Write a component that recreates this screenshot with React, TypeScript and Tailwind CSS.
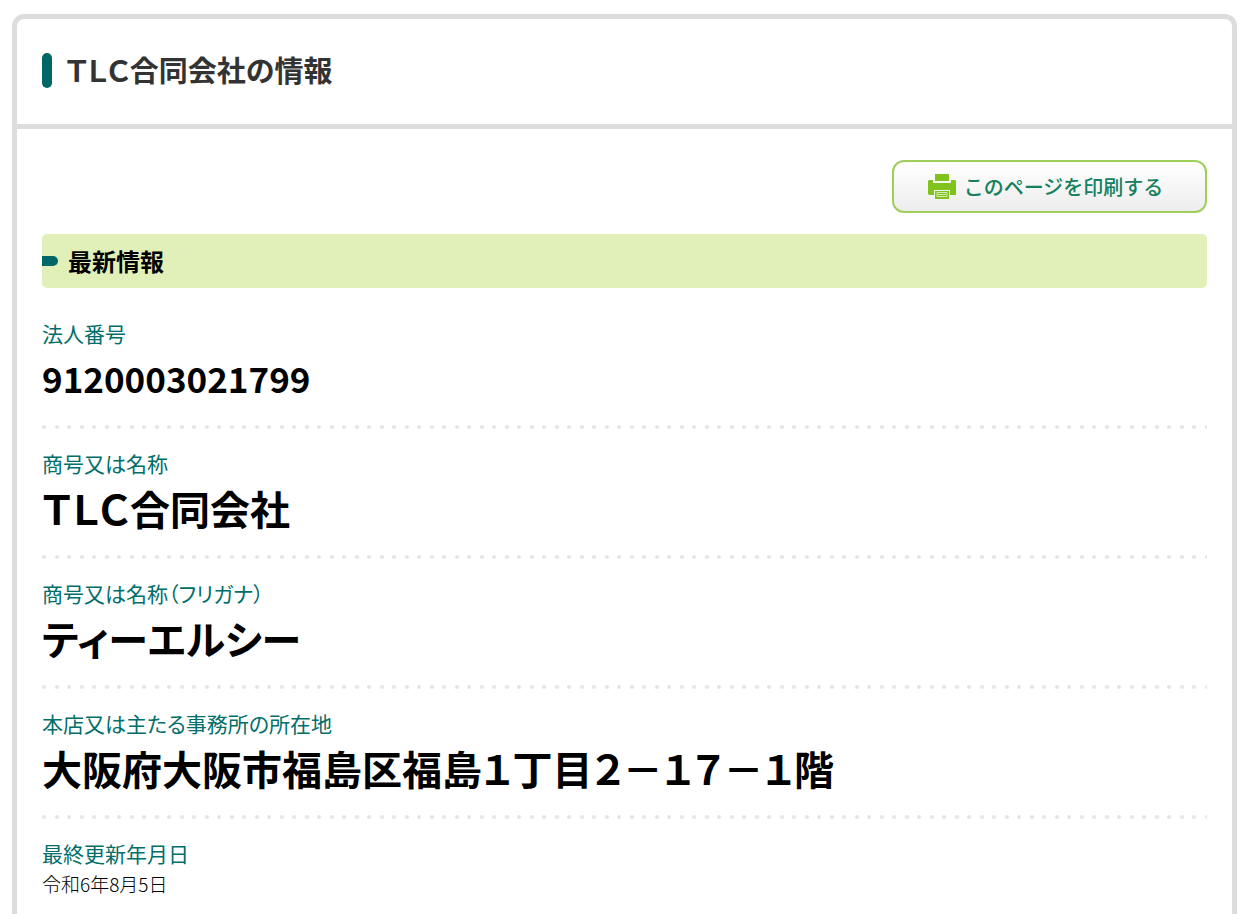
import { ReactNode } from 'react';

interface InfoItem {
  label: string;
  value: string;
  size?: 'number' | 'large' | 'small';
}

const items: InfoItem[] = [
  { label: '法人番号', value: '9120003021799', size: 'number' },
  { label: '商号又は名称', value: 'ＴＬＣ合同会社', size: 'large' },
  { label: '商号又は名称（フリガナ）', value: 'ティーエルシー', size: 'large' },
  { label: '本店又は主たる事務所の所在地', value: '大阪府大阪市福島区福島１丁目２－１７－１階', size: 'large' },
  { label: '最終更新年月日', value: '令和6年8月5日', size: 'small' },
];

const valueStyles = {
  number: 'text-[35px] leading-[60px] font-bold',
  large: 'text-[40px] leading-[60px] font-bold',
  small: 'text-[19px] leading-[32px] font-light',
};

function PrinterIcon() {
  return (
    <svg width="28" height="26" viewBox="0 0 28 26" aria-hidden="true">
      <path fill="#7fc31c" d="M7 0h14v7H7zM1 6h4v3h18V6h4l1 1v14h-6v-5H6v5H1l-1-1V7z" />
      <path fill="#7fc31c" d="M7 17h14v8H7z" />
      <path stroke="#d6ecae" strokeWidth="1" fill="none" d="M9 18.5h10v4H9zM10 20.5h8" />
    </svg>
  );
}

function PanelHeader({ children }: { children: ReactNode }) {
  return (
    <header className="flex h-[110px] items-center gap-[14px] border-b-5 border-[#ddd] px-[25px] pb-[2px]">
      <span className="h-[35px] w-[10px] rounded-full bg-[#006666]" />
      <h1 className="pb-1 text-[29px] leading-[40px] font-bold text-[#333]">{children}</h1>
    </header>
  );
}

function InfoRow({ item, last }: { item: InfoItem; last: boolean }) {
  return (
    <div>
      <dt className="text-[21px] leading-[30px] text-[#006e6a]">{item.label}</dt>
      <dd className={valueStyles[item.size ?? 'large']}>{item.value}</dd>
      {!last && (
        <dd
          aria-hidden="true"
          className="mt-[17px] mb-[19px] h-[4px] bg-[radial-gradient(circle_at_2px_2px,#e4e4e4_1px,transparent_3px),radial-gradient(circle_at_15px_2px,#e4e4e4_1px,transparent_3px)] bg-[length:25px_4px] bg-repeat-x"
        />
      )}
    </div>
  );
}

export default function App() {
  return (
    <div className="flex min-h-screen flex-col bg-white pt-[14px] pr-[19px] pl-[12px] font-['Noto_Sans_CJK_JP',sans-serif] text-black [font-feature-settings:'palt']">
      <main className="flex-1 rounded-t-xl border-5 border-b-0 border-[#ddd]">
        <PanelHeader>ＴＬＣ合同会社の情報</PanelHeader>

        <div className="px-[25px] pt-[31px]">
          <div className="flex justify-end">
            <button
              type="button"
              onClick={() => window.print()}
              className="flex h-[53px] w-[315px] items-center justify-center gap-2 rounded-xl border-2 border-[#9fce5b] bg-linear-to-b from-white to-[#ededed] pr-2 text-[20px] font-medium text-[#14805e] [font-feature-settings:normal]"
            >
              <PrinterIcon />
              このページを印刷する
            </button>
          </div>

          <h2 className="mt-[21px] flex h-[54px] items-center gap-[10px] rounded-[5px] bg-[#e0f0b8] text-[24px] font-bold">
            <span className="h-[10px] w-[16px] rounded-r-full bg-[#006666]" />
            最新情報
          </h2>

          <dl className="pt-[30px]">
            {items.map((item, index) => (
              <InfoRow key={item.label} item={item} last={index === items.length - 1} />
            ))}
          </dl>
        </div>
      </main>
    </div>
  );
}
